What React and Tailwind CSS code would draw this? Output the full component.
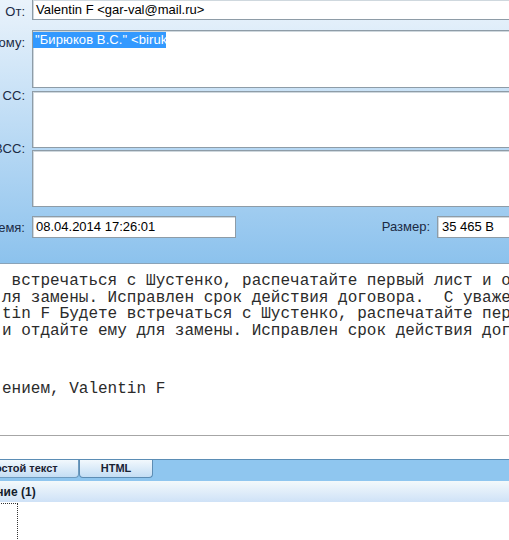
const field = 'bg-white border border-[#8e9ca7] shadow-[inset_1px_1px_0_#cfd8de]';

function Label({ children, className = '' }) {
  return (
    <div className={`w-[32px] shrink-0 flex justify-end pr-[7px] whitespace-nowrap leading-[15px] ${className}`}>
      {children}
    </div>
  );
}

function Header() {
  return (
    <div className="bg-gradient-to-b from-[#eaf3fb] to-[#8cc2ed] border-b border-[#8aa3b8] pb-[25px] text-[13px] text-[#1b2a44]">
      <div className="flex items-start">
        <Label className="pt-[4px]">От:</Label>
        <div className={`${field} flex-1 -mr-[4px] -mt-px h-[21px] pl-[3px] pt-[2px] leading-[15px] text-black whitespace-nowrap`}>
          Valentin F &lt;gar-val@mail.ru&gt;
        </div>
      </div>

      <div className="flex items-start mt-[10px]">
        <Label className="pt-[5px]">Кому:</Label>
        <div className={`${field} flex-1 -mr-[4px] h-[58px] pt-[1px]`}>
          <div className="w-[133px] h-[16px] overflow-hidden whitespace-nowrap bg-[#3399ff] text-white pl-[2px] leading-[16px] tracking-[0.1px]">
            "Бирюков В.С." &lt;biruko@mail.ru&gt;
          </div>
        </div>
      </div>

      <div className="flex items-start mt-[3px]">
        <Label className="-mt-[3px]">CC:</Label>
        <div className={`${field} flex-1 -mr-[4px] h-[57px]`} />
      </div>

      <div className="flex items-start mt-[2px]">
        <Label className="-mt-[9px]">BCC:</Label>
        <div className={`${field} flex-1 -mr-[4px] h-[57px]`} />
      </div>

      <div className="flex items-center mt-[9px]">
        <Label>Время:</Label>
        <div className={`${field} w-[204px] h-[22px] pl-[3px] leading-[20px] text-black`}>08.04.2014 17:26:01</div>
        <div className="flex-1 flex justify-end pr-[7px]">Размер:</div>
        <div className={`${field} w-[76px] -mr-[4px] h-[22px] pl-[4px] leading-[20px] text-black whitespace-nowrap`}>35 465 B</div>
      </div>
    </div>
  );
}

const lines = [
  ' встречаться с Шустенко, распечатайте первый лист и отдайте ему',
  'ля замены. Исправлен срок действия договора.  С уважением,',
  'tin F Будете встречаться с Шустенко, распечатайте первый лист',
  'и отдайте ему для замены. Исправлен срок действия договора.',
];

function Body() {
  return (
    <div className="h-[172px] border-b border-[#a6a6a6] overflow-hidden whitespace-pre pl-[2px] pt-[9px] font-['Liberation_Mono','Courier_New',monospace] text-[16px] leading-[16.7px] text-[#2b2b2b]">
      {lines.map((l, i) => (
        <div key={i}>{l}</div>
      ))}
      <div className="mt-[41px]">ением, Valentin F</div>
    </div>
  );
}

function Tabs() {
  return (
    <div className="mt-[23px] h-[22px] border-t border-[#5b8db5] bg-[#8fc6ef] flex items-start text-[11px] font-bold text-[#1a2233]">
      <div className="-ml-[40px] w-[119px] h-[18px] flex items-center justify-center bg-gradient-to-b from-[#f2f8fd] to-[#c4def4] border-b border-r border-[#6f9cc0] rounded-br-[4px]">
        Простой текст
      </div>
      <div className="w-[74px] h-[18px] flex items-center justify-center bg-gradient-to-b from-[#f2f8fd] to-[#c4def4] border-x border-b border-[#5d8db4] rounded-b-[4px]">
        HTML
      </div>
    </div>
  );
}

function Attachments() {
  return (
    <>
      <div className="h-[21px] flex items-center bg-gradient-to-b from-[#f3f9fb] to-[#cfe2f7] text-[12px] font-bold text-[#141c2b] whitespace-nowrap">
        <span className="-ml-[42px]">Вложение (1)</span>
      </div>
      <div className="-ml-[20px] mt-[1px] w-[38px] h-[60px] border border-dotted border-[#333]" />
    </>
  );
}

export default function App() {
  return (
    <div className="w-[509px] h-[540px] overflow-hidden bg-white font-['Liberation_Sans',Arial,sans-serif]">
      <Header />
      <Body />
      <Tabs />
      <Attachments />
    </div>
  );
}
